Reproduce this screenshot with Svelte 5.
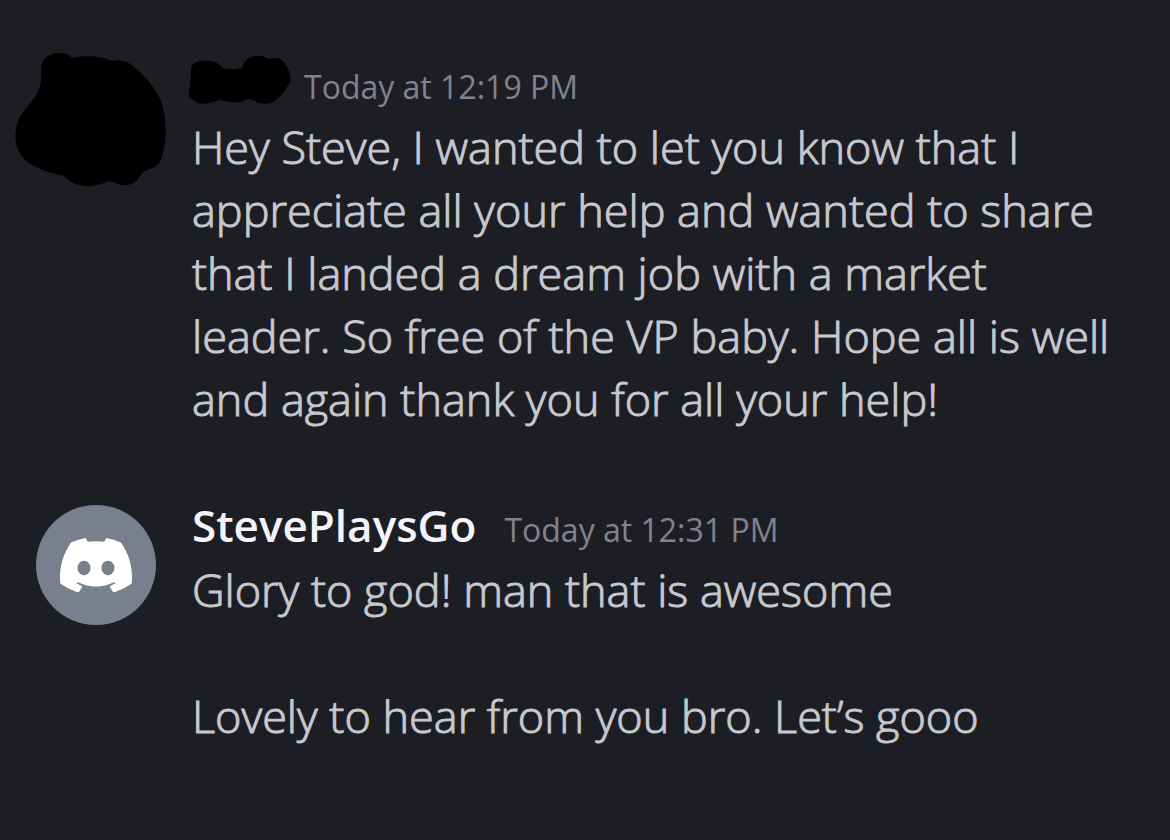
<script lang="ts">
	interface Message {
		id: number;
		author: string;
		time: string;
		lines: string[];
	}

	const messages: Message[] = [
		{
			id: 1,
			author: "",
			time: "Today at 12:19 PM",
			lines: [
				"Hey Steve, I wanted to let you know that I",
				"appreciate all your help and wanted to share",
				"that I landed a dream job with a market",
				"leader. So free of the VP baby. Hope all is well",
				"and again thank you for all your help!",
			],
		},
		{
			id: 2,
			author: "StevePlaysGo",
			time: "Today at 12:31 PM",
			lines: ["Glory to god! man that is awesome", "", "Lovely to hear from you bro. Let’s gooo"],
		},
	];
</script>

<main>
	{#each messages as message (message.id)}
		<article>
			{#if message.author}
				<div class="avatar">
					<svg class="logo" viewBox="0 0 127.14 96.36" aria-hidden="true">
						<path
							d="M107.7,8.07A105.15,105.15,0,0,0,81.47,0a72.06,72.06,0,0,0-3.36,6.83A97.68,97.68,0,0,0,49,6.83,72.37,72.37,0,0,0,45.64,0,105.89,105.89,0,0,0,19.39,8.09C2.79,32.65-1.71,56.6.54,80.21h0A105.73,105.73,0,0,0,32.71,96.36,77.7,77.7,0,0,0,39.6,85.25a68.42,68.42,0,0,1-10.85-5.18c.91-.66,1.8-1.34,2.66-2a75.57,75.57,0,0,0,64.32,0c.87.71,1.76,1.39,2.66,2a68.68,68.68,0,0,1-10.87,5.19,77,77,0,0,0,6.89,11.1A105.25,105.25,0,0,0,126.6,80.22h0C129.24,52.84,122.09,29.11,107.7,8.07ZM42.45,65.69C36.18,65.69,31,60,31,53s5-12.74,11.43-12.74S54,46,53.89,53,48.84,65.69,42.45,65.69Zm42.24,0C78.41,65.69,73.25,60,73.25,53s5-12.74,11.44-12.74S96.23,46,96.12,53,91.08,65.69,84.69,65.69Z"
						/>
					</svg>
				</div>
			{:else}
				<!-- Hidden avatar, the scribble spills over the round slot -->
				<div class="avatar hidden">
					<svg class="scribble" viewBox="0 0 120 120" aria-hidden="true">
						<path
							d="M5 8C5-3 12-9 24-9C31-9 34-6 36-4C48-7 66-6 76-1C84-3 93 0 98 5C109 14 121 27 126 42C132 63 130 88 124 100C119 107 112 107 107 110C102 117 100 122 91 123C83 124 77 119 72 119C67 121 61 125 48 124C38 122 34 120 28 114C14 111-3 106-12 97C-21 87-23 74-18 59C-13 47-3 40 1 31C6 23 5 18 5 8Z"
						/>
					</svg>
				</div>
			{/if}
			<div class="content">
				<header>
					<h2>
						{#if message.author}
							{message.author}
						{:else}
							<svg class="hidden-name" viewBox="0 0 104 50" role="img" aria-label="Hidden name">
								<path
									d="M3 16C3 8 8 6 18 6C26 5 32 9 36 14C43 14 49 14 54 13C56 5 62 1 69 1C75 0 78 3 81 4C88 2 94 3 97 9C102 15 104 23 101 29C97 36 94 40 89 44C83 50 73 50 67 46C62 43 58 44 53 47C45 48 36 46 31 45C22 49 12 51 5 45C0 42 0 37 2 32Z"
								/>
							</svg>
						{/if}
					</h2>
					<time>{message.time}</time>
				</header>
				<p>{message.lines.join("\n")}</p>
			</div>
		</article>
	{/each}
</main>

<style>
	:global(body) {
		margin: 0;
		background: #1d1e24;
	}
	main {
		display: flex;
		flex-direction: column;
		gap: 64px;
		padding: 51px 36px;
		color: #c7c8ce;
		font-family: "Open Sans", "Noto Sans", sans-serif;
		font-weight: 300;
	}
	article {
		display: flex;
		gap: 36px;
	}
	.avatar {
		display: flex;
		flex: none;
		align-items: center;
		justify-content: center;
		width: 120px;
		height: 120px;
		margin-top: 11px;
		border-radius: 50%;
		background: #7a7f8d;
	}
	.avatar.hidden {
		background: none;
	}
	.logo {
		width: 72px;
		fill: #fff;
	}
	.scribble {
		width: 120px;
		height: 120px;
		overflow: visible;
	}
	.content {
		flex: 1;
		min-width: 0;
	}
	header {
		display: flex;
		align-items: baseline;
		height: 64px;
		line-height: 62px;
	}
	h2 {
		margin: 0 28px 0 0;
		color: #f3f3f9;
		font-size: 44px;
		font-weight: 600;
	}
	.hidden-name {
		width: 104px;
		height: 50px;
		margin: 0 -16px 0 -4px;
		vertical-align: -6px;
	}
	time {
		color: #83828c;
		font-size: 32px;
		font-weight: 400;
	}
	p {
		margin: 0;
		font-size: 45px;
		line-height: 63px;
		white-space: pre;
		/* the light cut is a bit thin on the dark background */
		-webkit-text-stroke: 1px #c7c8ce;
	}
</style>
